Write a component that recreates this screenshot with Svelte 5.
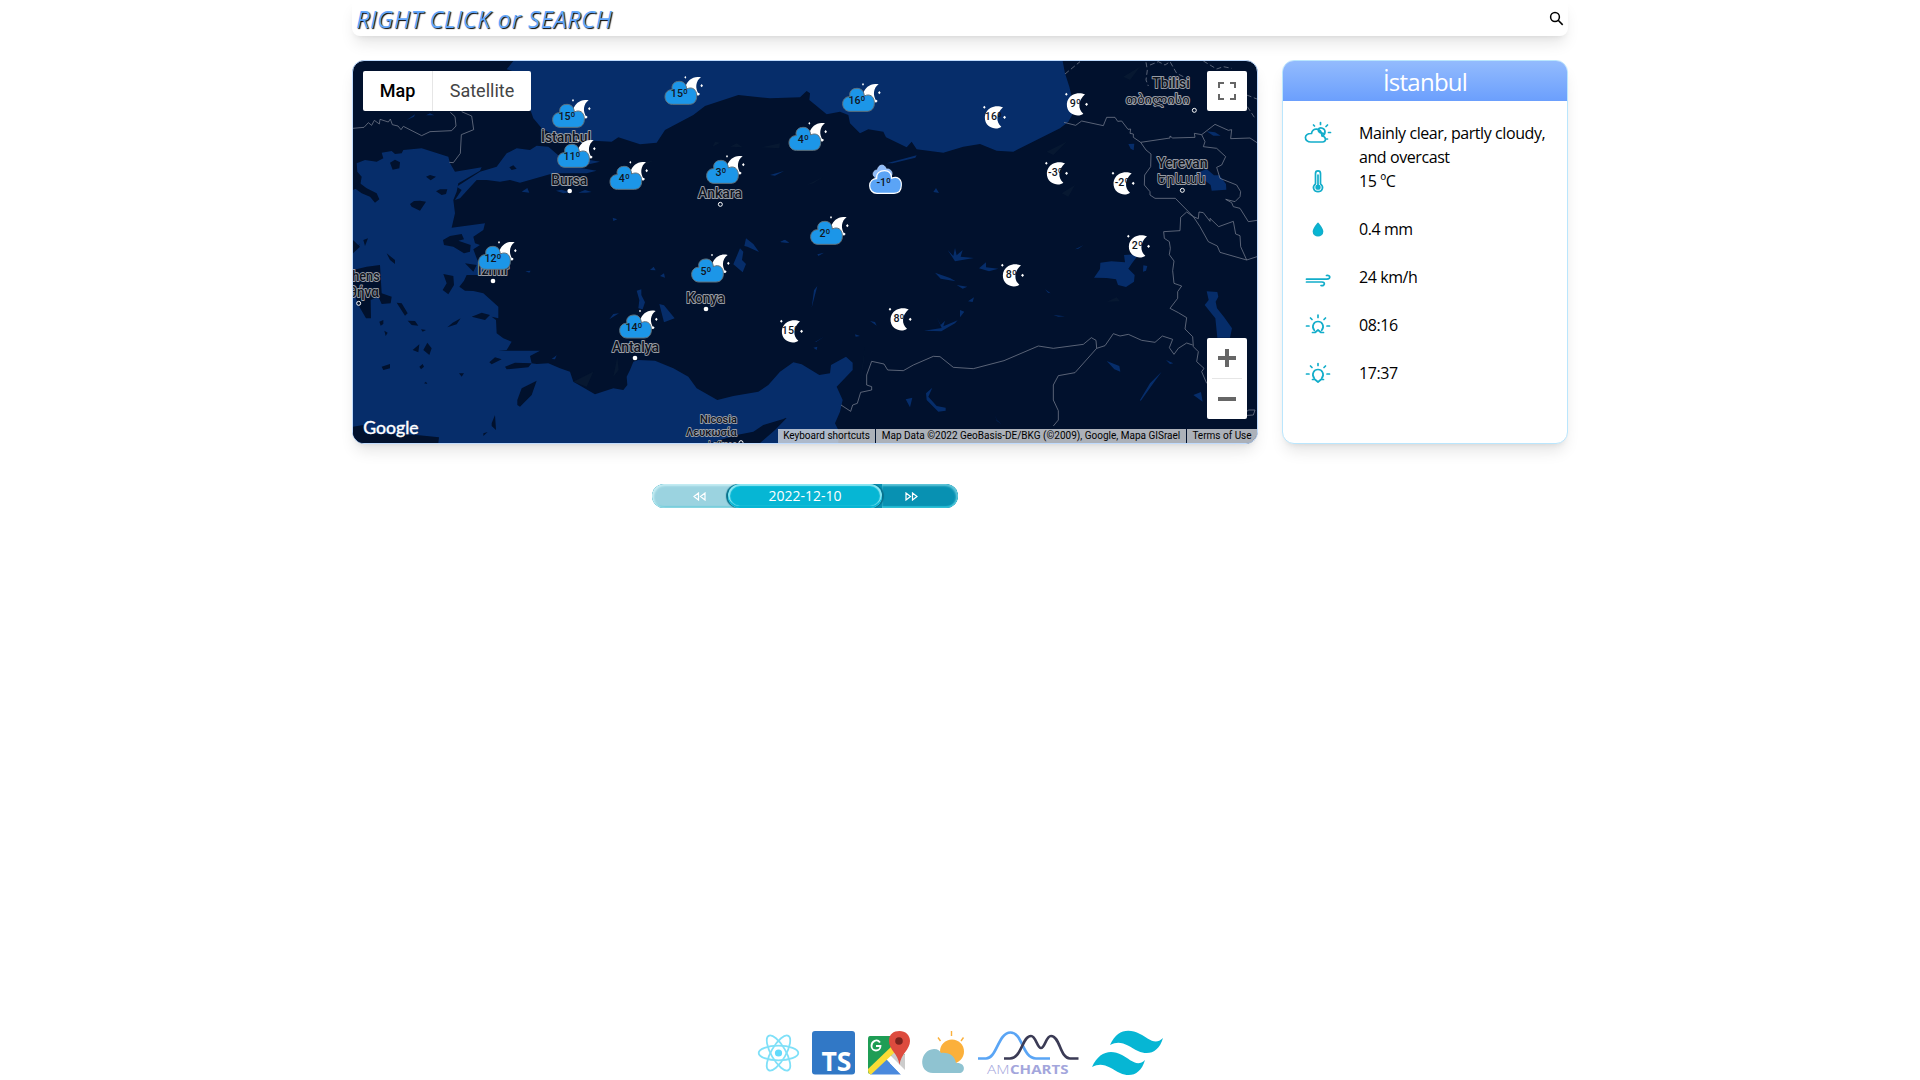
<script>
  const cloudy = [
    [974, 243, '15º'], [637, 312, '15º'], [652, 432, '11º'], [809, 498, '4º'],
    [1099, 480, '3º'], [1507, 264, '16º'], [1346, 381, '4º'], [1411, 663, '2º'],
    [415, 738, '12º'], [1054, 776, '5º'], [838, 944, '14º']
  ];
  const clear = [
    [1934, 318, '16º'], [2180, 279, '9º'], [2120, 486, '-3º'], [2320, 516, '-2º'],
    [2366, 705, '2º'], [1988, 792, '8º'], [1651, 924, '8º'], [1325, 960, '15º']
  ];
  // text, x, baseline, width, size
  const labels = [
    ['İstanbul', 603, 426, 150, 42], ['Bursa', 634, 556, 108, 42], ['Ankara', 1074, 595, 132, 42],
    ['İzmir', 413, 825, 94, 42], ['Konya', 1039, 910, 115, 42], ['Antalya', 816, 1057, 141, 42],
    ['hens', 37, 844, 82, 42], ['θήνα', 28, 890, 88, 42],
    ['Nicosia', 1080, 1269, 111, 35], ['Λευκωσία', 1038, 1307, 152, 35], ['Lefkoşa', 1105, 1346, 85, 35],
    ['Tbilisi', 2437, 264, 112, 42], ['თბილისი', 2357, 312, 192, 38],
    ['Yerevan', 2451, 505, 152, 42], ['Երևան', 2451, 551, 146, 40]
  ];
  const towns = [[689, 573], [459, 843], [1098, 927], [885, 1074]];
  const capitals = [[1141, 613], [56, 910], [1203, 1328], [2563, 331], [2527, 571]];
</script>

<div class="page">
  <header>
    <h1>RIGHT CLICK or SEARCH</h1>
    <svg class="search" viewBox="0 0 16 16"><circle cx="6.4" cy="6.4" r="4.7" /><path d="M9.8 9.8 14.6 14.8" /></svg>
  </header>

  <main>
    <section class="map">
      <svg class="canvas" viewBox="39 183 2712 1146" preserveAspectRatio="none">
        <g class="sea">
          <path d="M520 183 500 208 515 212 573 335 580 355 605 385 640 405 700 418 760 422 815 425 835 412 900 433 950 428 975 390 1060 345 1095 318 1195 285 1290 295 1380 292 1400 273 1410 280 1408 300 1460 343 1500 335 1525 345 1530 370 1560 400 1585 388 1630 395 1638 412 1700 442 1715 425 1730 448 1810 458 1870 440 1920 432 1970 452 2020 455 2100 415 2160 385 2185 365 2205 330 2188 260 2175 220 2168 183Z" />
          <path d="M50 490 75 480 110 485 130 475 125 458 155 453 165 462 185 460 190 450 245 445 325 470 330 490 345 515 425 502 420 512 355 550 350 575 340 600 345 640 335 683 435 670 430 690 400 710 405 730 420 735 400 748 412 780 430 800 440 815 415 825 380 825 372 842 358 860 375 872 400 873 430 880 475 920 475 955 455 950 468 960 470 1000 490 1015 515 1025 500 1050 475 1052 600 1052 570 1068 575 1090 590 1092 625 1090 660 1105 690 1115 700 1145 765 1183 820 1165 850 1170 862 1155 860 1130 870 1110 880 1085 895 1080 945 1082 1000 1105 1045 1130 1070 1165 1132 1200 1180 1188 1255 1175 1285 1155 1320 1115 1360 1087 1385 1093 1438 1125 1470 1120 1473 1095 1518 1070 1538 1088 1538 1110 1490 1160 1508 1200 1500 1235 1485 1270 1495 1290 1495 1329 39 1329 39 760 60 740 39 720 39 570 60 560 65 530 52 515Z" />
          <path d="M350 560 420 515 470 500 500 460 530 445 570 450 590 437 625 440 660 470 750 480 780 485 750 492 700 500 770 512 740 520 640 520 540 548 510 540 480 545 440 540 410 540 360 595 345 600 365 570Z" />
          <path d="M200 360 225 343 222 350ZM258 346 270 340 283 346ZM545 575 562 564 568 578ZM648 572 665 569 690 577 670 580ZM715 578 735 570 755 576 738 578ZM1290 525 1332 513 1305 527ZM818 653 832 658 820 663ZM1213 738 1218 715 1240 732 1257 756 1222 740ZM1322 727 1332 721 1348 729ZM1200 745 1210 755 1206 780 1218 792 1208 817 1180 793ZM1640 490 1730 466 1726 473 1658 490ZM1780 576 1788 564 1797 579ZM2365 432 2383 431 2381 451 2372 446ZM2600 394 2625 397 2642 407 2620 407ZM2580 515 2600 507 2622 526 2638 526 2658 552 2659 569 2615 572 2612 555 2580 530Z" />
          <path d="M890 872 904 868 904 885 915 907 908 928 895 925 898 900ZM958 912 972 916 1004 955 972 967ZM808 958 820 942 837 940ZM960 828 972 820 975 833ZM930 810 941 800 947 811ZM556 814 572 812 568 818ZM635 1077 650 1066 645 1078Z" />
          <path d="M2262 833 2280 807 2281 788 2314 784 2355 787 2352 765 2397 762 2376 790 2365 806 2384 825 2382 845 2358 861 2334 855 2328 838 2300 834ZM2410 796 2422 798 2418 812 2409 815ZM2600 874 2632 876 2635 890 2627 905 2631 925 2652 951 2676 985 2670 1013 2632 1013 2626 955 2594 915 2606 900Z" />
          <path d="M1823 750 1840 768 1845 744 1850 766 1868 750 1862 770 1902 774 1845 784ZM1917 805 1938 787 1938 802 1975 806 1947 814ZM1785 818 1830 834 1847 844 1802 836ZM1850 855 1882 860 1868 866ZM1415 923 1432 858 1422 871ZM1432 763 1452 758 1435 768ZM1320 725 1335 719 1348 728ZM2205 748 2230 736 2215 746ZM2115 868 2132 880 2124 878ZM1884 904 1902 892 1898 906ZM1860 952 1860 930 1873 935ZM1752 992 1805 984 1790 950 1802 975 1815 962 1810 979 1853 961 1845 970 1804 994ZM1590 963 1605 966 1610 977ZM1545 1003 1560 1008 1547 1010ZM1420 1043 1432 1040 1430 1050ZM1425 1026 1452 1010 1428 1026ZM2140 945 2175 949 2155 950ZM1697 1198 1717 1193 1710 1222ZM1758 1180 1777 1163 1765 1190 1790 1218 1817 1223 1817 1232 1795 1235 1760 1200ZM2300 1083 2338 1098 2341 1115 2323 1108ZM2400 1200 2430 1150 2465 1115 2440 1150 2402 1203ZM2478 1080 2500 1090 2490 1092ZM2560 1185 2583 1176 2588 1205ZM1965 1245 1970 1260 1985 1273 1970 1262Z" />
        </g>
        <g class="land">
          <path d="M150 488 165 479 180 487 178 505 158 509ZM210 612 222 603 240 602 258 605 240 632 215 620ZM288 574 300 568 322 568 318 582 305 585ZM258 530 270 525 288 530 272 541ZM508 502 520 496 530 506 515 510ZM40 562 60 550 80 565 110 580 118 598 105 608 90 590 65 580ZM39 520 58 545 40 555ZM309 720 330 708 365 702 372 718 355 722 392 735 390 755 372 760 340 740 312 735ZM70 720 84 715 75 738ZM45 742 60 732 52 745ZM140 760 165 780 165 792 150 780Z" />
          <path d="M39 810 80 800 120 795 125 880 155 890 152 910 125 912 115 890 92 900 93 955 78 955 55 915 39 870ZM310 822 340 828 342 855 325 883 308 870 320 850ZM170 908 185 910 203 940 195 947ZM203 962 225 963 235 977 215 975ZM118 965 130 960 130 972 122 977ZM243 988 258 990 248 995ZM133 992 143 998 137 1008ZM322 982 338 968 362 955 350 973ZM395 950 425 938 450 945 435 960ZM218 1050 238 1033 235 1057ZM250 1050 262 1028 275 1045 268 1065ZM125 1100 150 1092 150 1105 130 1110ZM238 1100 248 1092 252 1100 243 1108ZM357 1120 372 1120 365 1130ZM252 1150 258 1145 262 1152ZM448 1087 465 1072 485 1078 455 1093ZM495 1100 525 1088 575 1090 565 1102 500 1108ZM532 1200 545 1165 590 1142 575 1185 540 1220 532 1215ZM455 1270 465 1245 468 1290 455 1278ZM430 1300 443 1296 430 1308Z" />
          <path d="M39 1280 70 1275 75 1300 230 1305 297 1312 295 1329 39 1329ZM1110 1329 1190 1305 1240 1295 1270 1275 1340 1254 1305 1290 1260 1329ZM1255 1295 1290 1276 1338 1253 1300 1290ZM375 790 410 795 400 815ZM1260 1289 1338 1253 1330 1262 1275 1310Z" />
        </g>
        <g class="relief">
          <path d="M1118 440 1125 425 1140 428ZM1170 440 1190 430 1208 442ZM1265 442 1320 430 1318 445ZM900 490 940 482 920 492ZM2120 455 2180 425 2140 465ZM2165 580 2205 555 2185 590ZM2350 230 2400 200 2370 240ZM700 1145 760 1115 740 1160ZM1400 555 1450 530 1420 550ZM820 1130 832 1070 836 1110ZM1560 1150 1575 1040 1570 1090ZM2300 905 2330 892 2340 904Z" />
        </g>
        <g class="border">
          <path d="M39 385 72 382 85 368 95 376 103 361 118 372 120 358 145 366 151 357 157 374 174 378 183 389 190 379 245 407 270 395 335 392 348 378 345 350 331 337M365 335 395 348 401 389 364 404 361 460 340 488 328 487" />
          <path d="M2172 367 2207 376 2225 363 2290 377 2300 352 2325 352 2333 364 2345 363 2364 388 2372 387 2370 400 2380 402 2380 412 2402 427 2490 414 2490 408 2498 414 2565 412 2563 400 2585 404 2625 373 2665 391 2675 389 2672 416 2730 414 2751 428" />
          <path d="M2402 427 2418 450 2433 462 2432 500 2414 525 2413 555 2430 575 2430 585 2445 595 2506 595 2560 650 2575 656 2577 636 2590 638 2610 664 2610 655 2636 680 2680 664 2687 702 2700 707 2702 740 2720 780 2751 770M2585 404 2595 425 2590 440 2630 445 2657 470 2645 495 2630 502 2640 535 2690 555 2702 575 2700 590 2685 605 2657 598 2675 608 2680 620 2700 625 2725 665 2751 661" />
          <path d="M2560 650 2540 636 2522 652 2520 692 2471 695 2473 715 2488 725 2491 745 2488 764 2502 783 2498 812 2502 850 2525 858 2513 875 2513 895 2490 925 2515 938 2540 953 2535 987 2558 1010 2560 1040 2575 1055 2570 1085 2592 1105 2585 1115 2600 1150M2560 650 2580 680 2605 725 2632 738 2640 757 2720 780" />
          <path d="M1503 1215 1532 1234 1538 1215 1552 1210 1562 1177 1595 1170 1595 1160 1580 1155 1580 1125 1595 1084 1632 1092 1643 1110 1690 1112 1720 1095 1780 1069 1800 1070 1840 1102 1900 1106 1992 1082 2095 1038 2140 1045 2230 1033 2254 1013 2268 1021 2270 1045 2205 1118 2155 1127 2140 1155 2140 1200 2155 1232 2155 1260 2140 1278M2270 1045 2295 1037 2320 1001 2340 1008 2365 1003 2405 1021 2445 1027 2467 1008 2498 1018 2488 1043 2502 1063 2515 1045 2540 1029 2558 1035M2700 1255 2725 1230 2745 1230 2740 1245 2710 1247" />
          <path stroke-dasharray="15 8" d="M2175 222 2220 185M2418 187 2422 210 2418 240 2425 258M2430 195 2455 185 2475 195 2490 185 2510 220 2550 240M2590 183 2630 207 2650 200 2675 205M2720 285 2751 297M2722 320 2745 355" />
        </g>
        <g class="labels">
          {#each labels as [name, x, y, w, size]}
            <text {x} {y} font-size={size} textLength={w} lengthAdjust="spacingAndGlyphs">{name}</text>
          {/each}
        </g>
        {#each towns as [x, y]}<circle class="town" cx={x} cy={y} r="7" />{/each}
        {#each capitals as [x, y]}<circle class="capital" cx={x} cy={y} r="6" />{/each}

        {#each cloudy as [x, y, t]}
          <g transform="translate({x} {y})">
            <path class="white" d="M63 16C68-2 86-17 109-11C93 0 90 22 103 40L97 44C91 33 80 28 69 28ZM59-11l3-4 3 4-3 4ZM107 14l4-5 4 5-4 5ZM98 39l4-4 4 4-5 5Z" />
            <path class="cloud" d="M23 26C19 11 29 1 44 1C56 1 65 9 66 24C83 15 96 27 96 43C97 60 88 70 74 70H23C9 70 1 59 1 47C1 34 11 25 23 26Z" />
            <text class="temp" x="44" y="48">{t}</text>
          </g>
        {/each}
        {#each clear as [x, y, t]}
          <g transform="translate({x} {y})">
            <path class="white" d="M55 4C45 0 31-2 17 6C-4 18-4 47 12 60C25 70 42 69 50 62C33 49 34 22 55 4ZM-5 4l4-5 4 5-4 4ZM55 34l5-5 4 5-4 5Z" />
            <text class="temp" x="26" y="42">{t}</text>
          </g>
        {/each}
        <g transform="translate(1588 510)">
          <path class="back" d="M17 22C5 14 14-2 24 0C26-16 45-22 51-3C62-5 70 4 68 14L60 30H18Z" />
          <path class="front" d="M22 26C20 10 31 2 46 2C58 2 66 10 67 25C84 16 97 29 96 45C96 60 88 70 74 70H23C9 70 1 59 1 47C1 34 11 25 22 26Z" />
          <text class="temp" x="43" y="48">-1º</text>
        </g>
        <text class="google" x="70" y="1303" textLength="166" lengthAdjust="spacingAndGlyphs">Google</text>
      </svg>

      <div class="types"><span class="on">Map</span><span>Satellite</span></div>
      <div class="full">
        <svg viewBox="0 0 18 18"><path d="M1 6V1H6M12 1H17V6M17 12V17H12M6 17H1V12" /></svg>
      </div>
      <div class="zoom">
        <svg viewBox="0 0 18 18"><path d="M0 9H18M9 0V18" /></svg>
        <i></i>
        <svg viewBox="0 0 18 18"><path d="M0 9H18" /></svg>
      </div>
      <div class="credit"><span>Keyboard shortcuts</span><span>Map Data ©2022 GeoBasis-DE/BKG (©2009), Google, Mapa GISrael</span><span>Terms of Use</span></div>
    </section>

    <aside>
      <h2>İstanbul</h2>
      <ul>
        <li>
          <svg viewBox="0 0 28 24"><path d="M7 21H18.500C22.500 21 22.500 15.500 18 15C17.500 6.500 8.500 6 7.500 12.500C-.5 12 -.5 21 7 21ZM14 8.500C16 5.500 21.500 7 21 11.500C20.800 13.500 19.800 14.600 18 15M14 8.500C14.500 11.500 16.500 12.500 20.500 12.500M16.500 1.500V3.500M22 5.500 23.500 4M24.500 11.500H26.500M22.500 18H23.500M9.500 4 10.500 5" /></svg>
          <span>Mainly clear, partly cloudy, and overcast</span>
        </li>
        <li>
          <svg viewBox="0 0 28 24"><path d="M11.500 14.800V4.500C11.500 1 16.500 1 16.500 4.500V14.800C20.500 18 18 22.700 14 22.700C10 22.700 7.500 18 11.500 14.800Z" /><path d="M14 6V16" /><circle class="solid" cx="14" cy="18.200" r="1.800" /></svg>
          <span>15 ºC</span>
        </li>
        <li>
          <svg viewBox="0 0 28 24"><path class="solid" d="M14 6.500C16 9 18.500 12 18.500 14.500C18.500 20 9.500 20 9.500 14.500C9.500 12 12 9 14 6.500Z" /></svg>
          <span>0.4 mm</span>
        </li>
        <li>
          <svg viewBox="0 0 28 24"><path d="M2.500 14.200H23C27 14.200 26.500 9.500 22.500 10.500M2.500 17H18C21.500 17 21 21.500 17 20.500" /></svg>
          <span>24 km/h</span>
        </li>
        <li>
          <svg viewBox="0 0 28 24"><path d="M10.300 17.300C7 13 10 8.500 14 8.500S21 13 17.700 17.300M8.500 19.500H11L14 17 17 19.500H19.500M14 2V4.500M6.500 5 8 6.500M21.500 5 20 6.500M2.500 13H5M23 13H25.500" /></svg>
          <span>08:16</span>
        </li>
        <li>
          <svg viewBox="0 0 28 24"><path d="M10.300 17.300C7 13 10 8.500 14 8.500S21 13 17.700 17.300M8.500 18.500H11L14 21 17 18.500H19.500M14 2.500V4.500M6.500 5 8 6.500M21.500 5 20 6.500M2.500 13H5M23 13H25.500" /></svg>
          <span>17:37</span>
        </li>
      </ul>
    </aside>
  </main>

  <nav>
    <button class="prev" aria-label="Previous day"><svg viewBox="0 0 13 9"><path d="M5.500 1V8L1 4.500ZM12 1V8L7.500 4.500Z" /></svg></button>
    <button class="date">2022-12-10</button>
    <button class="next" aria-label="Next day"><svg viewBox="0 0 13 9"><path d="M1 1V8L5.500 4.500ZM7.500 1V8L12 4.500Z" /></svg></button>
  </nav>

  <footer>
    <svg viewBox="758 1030 410 45">
      <g class="react">
        <ellipse cx="778.500" cy="1053" rx="19.800" ry="7.300" />
        <ellipse cx="778.500" cy="1053" rx="19.800" ry="7.300" transform="rotate(60 778.500 1053)" />
        <ellipse cx="778.500" cy="1053" rx="19.800" ry="7.300" transform="rotate(120 778.500 1053)" />
        <circle cx="778.500" cy="1053" r="3.600" />
      </g>
      <rect x="812" y="1031" width="43" height="43.500" rx="3" fill="#3178c6" />
      <text class="ts" x="821.500" y="1070.500" textLength="30" lengthAdjust="spacingAndGlyphs">TS</text>
      <g>
        <path fill="#1f9d55" d="M870 1036H890L905 1055 870 1074Q868 1074 868 1071V1039Q868 1036 870 1036Z" />
        <path fill="#4a89dd" d="M870 1074.500 886 1059 901 1074.500Z" />
        <path fill="#ccc" d="M897 1048 905 1055V1072L890 1057Z" />
        <path fill="#fff" d="M886 1059 890 1055 905 1070V1074.500H901Z" />
        <path fill="#fbdc35" d="M868 1069 892 1046 895 1052 871 1074.500Q868 1074 868 1069Z" />
        <path fill="#dd4b3e" d="M899.500 1065C898 1053 889 1050 889 1041C889 1034 893.500 1031 899.500 1031S910 1035 910 1041C910 1050 901 1053 899.500 1065Z" />
        <circle cx="899" cy="1041" r="3.800" fill="#7b231e" />
        <path d="M880 1042.500C877 1038.500 871.500 1041 871.500 1046C871.500 1052 880.500 1052 880.500 1046H876" fill="none" stroke="#fff" stroke-width="1.800" />
      </g>
      <circle cx="952" cy="1051.500" r="12" fill="#fbb03b" />
      <path d="M951.500 1031V1036M938 1037.500 940.500 1041M963.500 1037.500 961 1041" fill="none" stroke="#fbb03b" stroke-width="1.400" />
      <path fill="#8fc3d1" d="M933 1073C918 1073 919 1050 934 1049C938 1049 940 1051 941 1053C949 1052 955 1056 956 1063C966 1062 966 1073 959 1073Z" />
      <g class="curves">
        <path stroke="#5aa5f5" d="M978 1058.500H986C997 1058.500 998 1032.500 1010.500 1032.500S1022 1058.500 1036 1058.500H1050" />
        <path stroke="#3b3b55" d="M1004 1058.500H1010C1022 1058 1022 1036 1031 1036C1036 1036 1037 1048 1041 1048S1046 1036 1051 1036C1060 1036 1060 1058.500 1070 1058.500H1078.500" />
      </g>
      <text class="am" x="987" y="1074" textLength="22.500" lengthAdjust="spacingAndGlyphs">AM</text>
      <text class="am bold" x="1010" y="1074" textLength="58.500" lengthAdjust="spacingAndGlyphs">CHARTS</text>
      <path fill="#06b6d4" d="M1110 1045C1117 1030 1128 1028 1140 1034C1148 1038 1155 1046 1163 1038C1159 1052 1149 1056 1138 1051C1128 1046 1121 1039 1110 1045ZM1092 1067C1099 1052 1110 1049 1122 1055C1130 1059 1137 1068 1145 1060C1141 1074 1131 1078 1120 1073C1110 1068 1103 1061 1092 1067Z" />
    </svg>
  </footer>
</div>

<style>
  :global(body) { background: #fff; }
  .page { width: 1216px; height: 1080px; margin: 0 auto; display: flex; flex-direction: column; font-family: "Open Sans", "Noto Sans", sans-serif; color: #000; }
  header { height: 36px; box-sizing: border-box; display: flex; justify-content: space-between; padding: 0 4px 0 4px; border-radius: 0 0 8px 8px; box-shadow: 0 10px 15px -3px rgba(0,0,0,.1), 0 4px 6px -4px rgba(0,0,0,.1); }
  h1 { margin: 2px 0 0; font: italic 400 24px/34px "Open Sans", sans-serif; letter-spacing: .38px; color: #60a5fa; text-shadow: 1px 1px 1px #000; white-space: nowrap; }
  .search { width: 15px; height: 15px; margin-top: 11px; fill: none; stroke: #000; stroke-width: 1.6; }
  main { display: flex; justify-content: space-between; margin-top: 24px; height: 384px; }
  .map, aside { border: 1px solid #bfdbfe; box-sizing: border-box; border-radius: 12px; overflow: hidden; box-shadow: 0 10px 15px -3px rgba(0,0,0,.1), 0 4px 6px -4px rgba(0,0,0,.1); }
  .map { width: 906px; position: relative; background: #01112d; }
  .canvas { display: block; width: 904px; height: 382px; }
  .sea { fill: #062d6a; }
  .land { fill: #01112d; }
  .relief { fill: #0a1b33; opacity: .7; }
  .border { fill: none; stroke: #7a8191; stroke-width: 2.2; }
  .labels { font-family: Roboto, "DejaVu Sans", sans-serif; font-weight: 500; fill: #0e131d; stroke: #999da6; stroke-width: 5.5; paint-order: stroke; stroke-linejoin: round; }
  .town { fill: #fff; }
  .capital { fill: #01112d; stroke: #fff; stroke-width: 3; }
  .white { fill: #fff; }
  .cloud { fill: #1c96e8; stroke: #60717c; stroke-width: 3; }
  .back { fill: #8fbcfa; stroke: #b9d6fd; stroke-width: 2; }
  .front { fill: #5ba4f6; stroke: #fff; stroke-width: 3.5; }
  .temp { font: 500 32px Roboto, sans-serif; text-anchor: middle; fill: #10151d; }
  .google { font: 400 50px Lato, sans-serif; fill: #fff; stroke: #fff; stroke-width: 1.2; }
  .types { position: absolute; left: 10px; top: 10px; height: 40px; display: flex; background: #fff; border-radius: 2px; font: 18px/40px Roboto, sans-serif; color: #444; }
  .types span { width: 98px; text-align: center; }
  .types .on { width: 69px; color: #000; font-weight: 500; border-right: 1px solid #e6e6e6; }
  .full, .zoom { position: absolute; right: 10px; width: 40px; background: #fff; border-radius: 2px; display: flex; flex-direction: column; align-items: center; justify-content: center; }
  .full { top: 10px; height: 40px; }
  .zoom { bottom: 24px; height: 81px; gap: 11px; }
  .full svg, .zoom svg { width: 18px; height: 18px; fill: none; stroke: #666; }
  .full svg { stroke-width: 2; }
  .zoom svg { stroke-width: 4; }
  .zoom i { width: 30px; height: 1px; background: #e6e6e6; }
  .credit { position: absolute; right: 0; bottom: 0; display: flex; gap: 1px; font: 10px/14px Roboto, sans-serif; white-space: nowrap; }
  .credit span { background: rgba(245,245,245,.7); text-align: center; width: 97px; }
  .credit span:nth-child(2) { width: 310px; }
  .credit span:nth-child(3) { width: 70px; }
  aside { width: 286px; border-color: #bae6fd; background: #fff; }
  h2 { margin: 0; height: 40px; background: linear-gradient(#93bbfd, #6b9ffd); color: #fff; font: 400 24px/42px "Open Sans", sans-serif; letter-spacing: -.75px; text-align: center; }
  ul { list-style: none; margin: 0; padding: 20px 8px 0 21px; }
  li { display: flex; height: 48px; font-size: 16px; line-height: 24px; letter-spacing: -.42px; }
  li svg { width: 28px; height: 24px; flex: none; margin-right: 27px; fill: none; stroke: #12adca; stroke-width: 1.7; stroke-linecap: round; stroke-linejoin: round; }
  .solid { fill: #06b6d4; }
  nav { display: flex; width: 306px; height: 24px; margin: 40px 0 0 300px; border-radius: 12px; overflow: hidden; background: #0891b2; }
  button { border: 0; padding: 0; color: #fff; font: 14px/24px "Open Sans", sans-serif; height: 24px; }
  button svg { width: 13px; height: 9px; fill: none; stroke: #fff; stroke-width: 1.2; }
  .prev { width: 90px; margin-right: -14px; padding-left: 4px; background: #9bd3e0; border-radius: 12px 0 0 12px; box-shadow: inset 1px 1px 2px 1px #c5edf3, inset 0 -2px 1px #74cddb; }
  .date { width: 154px; background: #06b6d4; border-radius: 12px; position: relative; box-shadow: inset 0 -2px #06b6d4, inset 0 0 1px 2px #8ce6f2, -2px 0 1px #08718c, 2px 0 1px #08718c; }
  .next { flex: 1; background: #0891b2; border-radius: 0 12px 12px 0; padding-right: 18px; box-shadow: inset -1px 1px 2px 1px #62c7da, inset 0 -2px 1px #20bbd3; }
  footer { margin-top: auto; height: 50px; padding-left: 406px; }
  footer svg { display: block; width: 410px; height: 45px; overflow: visible; }
  .react { fill: none; stroke: #7fe0f8; stroke-width: 1.8; }
  .react circle { fill: #61dafb; stroke: none; }
  .ts { font: 700 26px "Open Sans", sans-serif; fill: #fff; }
  .curves { fill: none; stroke-width: 2.7; }
  .am { font: 300 13px "Open Sans", sans-serif; fill: #a3a6dc; }
  .bold { font-weight: 700; }
</style>
